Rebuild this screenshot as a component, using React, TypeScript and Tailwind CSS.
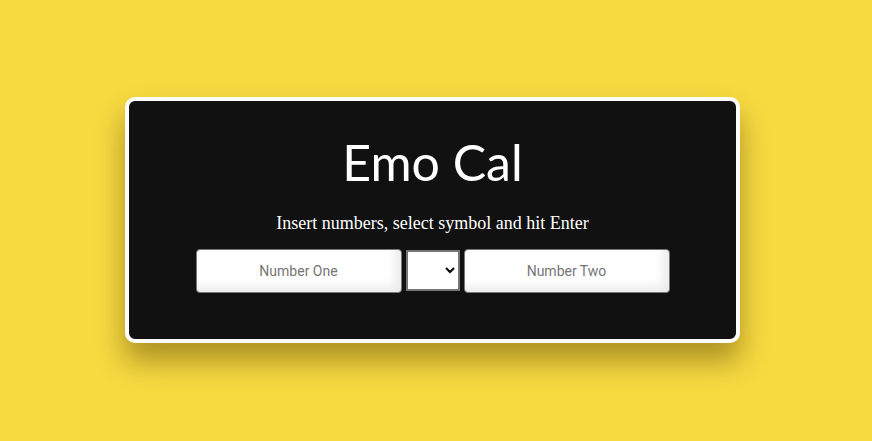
export default function App() {
  return (
    <div className="flex h-screen w-full items-center justify-center bg-[#f7d940]">
      <div className="mb-[2px] mr-[7px] flex h-[246px] w-[615px] flex-col items-center rounded-[10px] border-4 border-white bg-[#111111] shadow-[0_18px_28px_rgba(80,60,0,0.45)]">
        <h1 className="mt-[33px] text-[50px] leading-[56px] text-white [font-family:Lato,sans-serif]">
          Emo Cal
        </h1>
        <p className="mt-[23px] text-[18px] leading-[20px] text-white [font-family:'Liberation_Serif',serif]">
          Insert numbers, select symbol and hit Enter
        </p>
        <div className="mt-[16px] flex items-center gap-1">
          <input
            placeholder="Number One"
            className="h-[44px] w-[206px] rounded-[4px] border border-[#777] bg-white text-center text-[14px] text-black shadow-[inset_-6px_-6px_10px_rgba(0,0,0,0.08)] outline-none placeholder:text-[#757575] [font-family:Roboto,Arial,sans-serif]"
          />
          <select className="h-[41px] w-[54px] border-2 border-[#767676] bg-white text-black [font-family:Roboto,Arial,sans-serif]">
            <option></option>
            <option>+</option>
            <option>-</option>
          </select>
          <input
            placeholder="Number Two"
            className="h-[44px] w-[206px] rounded-[4px] border border-[#777] bg-white text-center text-[14px] text-black shadow-[inset_-6px_-6px_10px_rgba(0,0,0,0.08)] outline-none placeholder:text-[#757575] [font-family:Roboto,Arial,sans-serif]"
          />
        </div>
      </div>
    </div>
  );
}
